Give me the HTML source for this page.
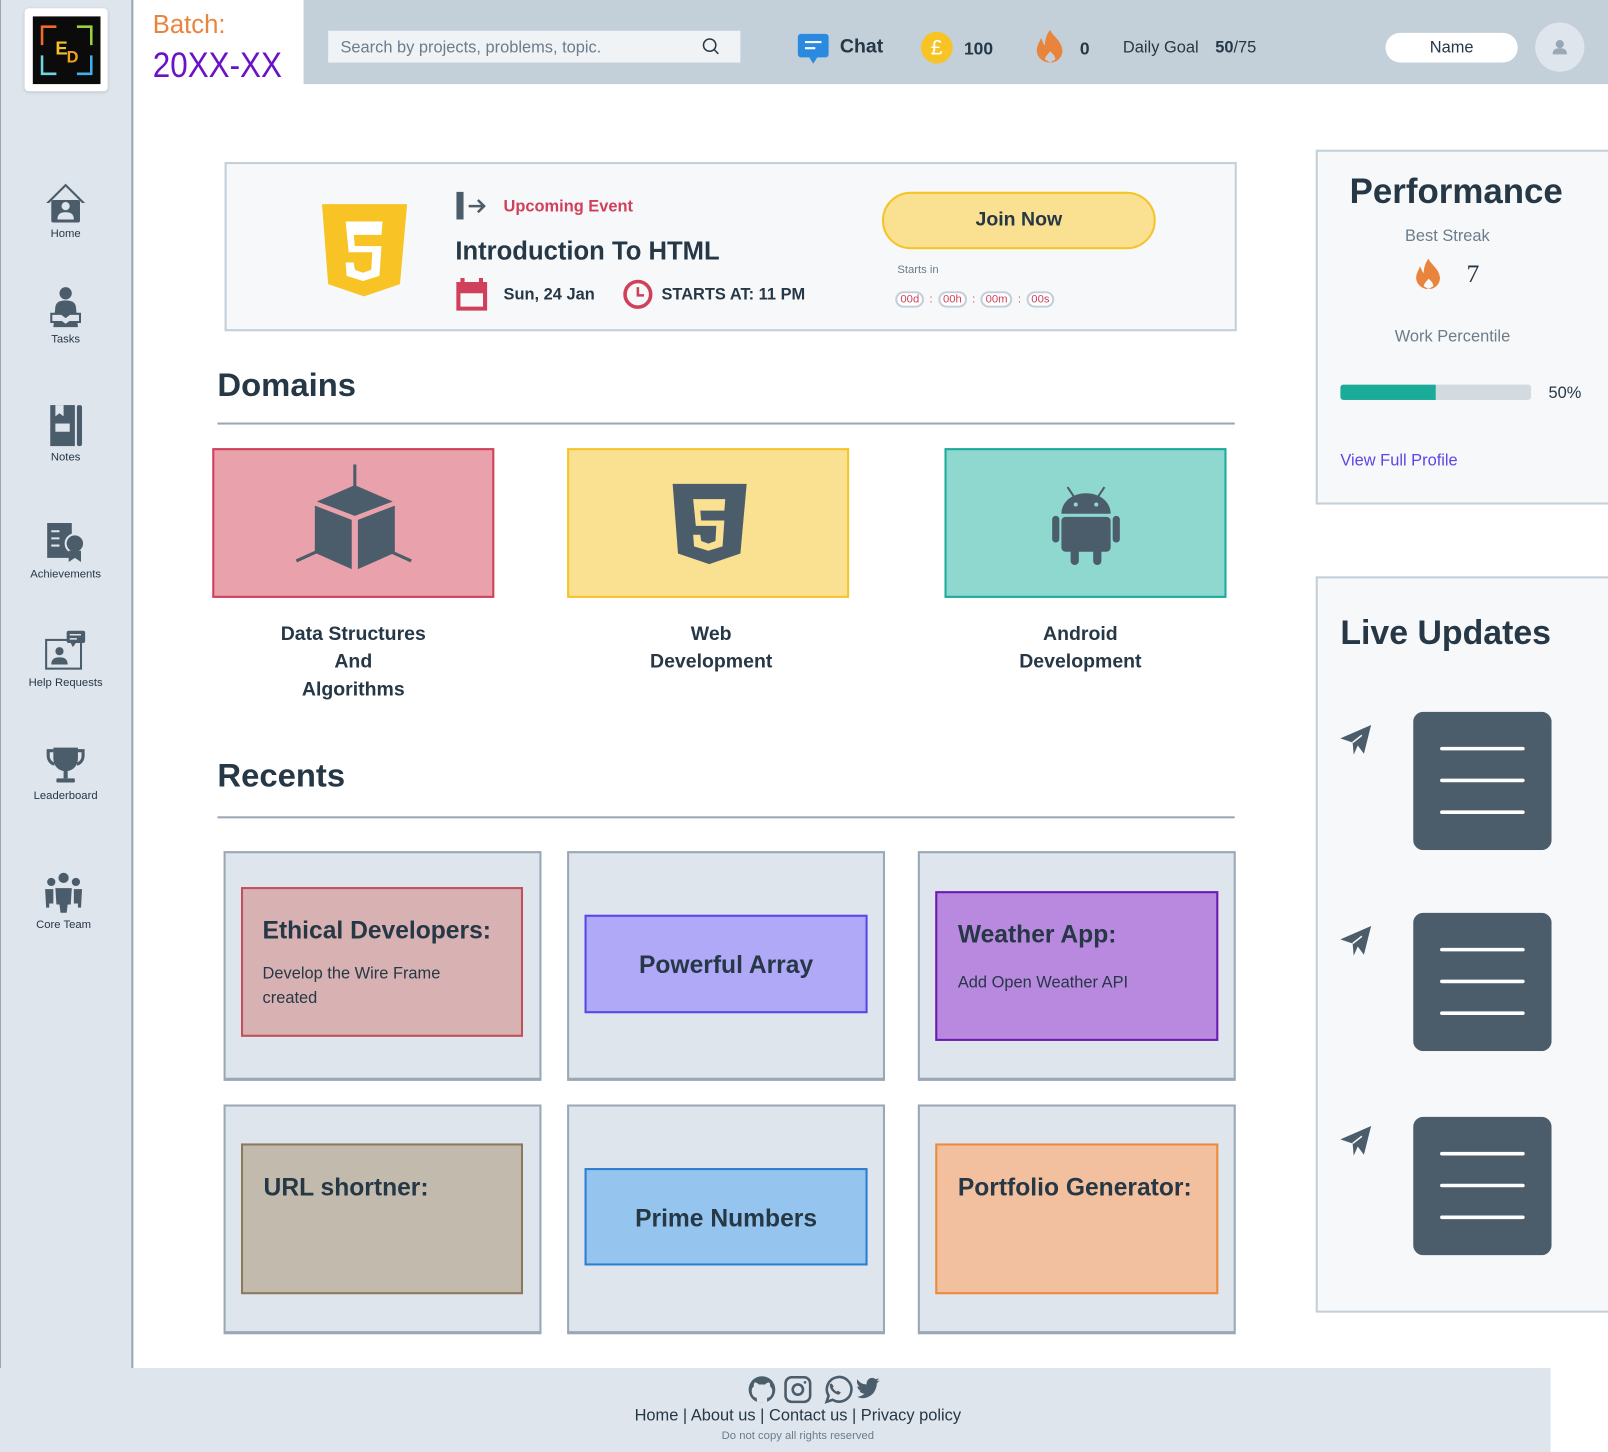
<!DOCTYPE html>
<html><head><meta charset="utf-8"><style>
*{margin:0;padding:0;box-sizing:border-box}
html,body{width:1608px;height:1452px;overflow:hidden;background:#fff;font-family:"Liberation Sans",sans-serif;color:#263746}
#w{position:absolute;left:0;top:0;width:1568px;height:1416px;transform:scale(1.02551);transform-origin:0 0}
.a{position:absolute}
.side{left:0;top:0;width:130px;height:1334px;background:#dfe5ed;border-right:2px solid #9aa8b6;border-left:1px solid #9aa8b6}
.nav{position:absolute;left:0;width:128px;text-align:center;font-size:11px;color:#263746}
.nav svg{display:block;margin:0 auto 4px}
.hdr{left:296px;top:0;width:1272px;height:82px;background:#c3cfd9}
.card{background:#f7f8fa;border:2px solid #c3cfd9}
.dom{border:2px solid}
.dl{position:absolute;text-align:center;font-weight:bold;font-size:19px;line-height:27px;color:#263746}
.rc{background:#dfe5ed;border:2px solid #9aa8b6;border-bottom-width:3px}
.in{border:2px solid;font-weight:bold;font-size:24px;color:#263746}
.cd{display:inline-block;border:2px solid #c3cfd9;border-radius:10px;font-size:11px;color:#d0405a;padding:0 3px;background:#fff}
</style></head><body><div id="w">
<div class="a side"></div>
<div class="a" style="left:24px;top:8px;width:81px;height:81px;background:#fff;border-radius:4px;box-shadow:0 1px 3px rgba(0,0,0,.15)"></div>
<div class="a" style="left:32px;top:16px;width:66px;height:66px;background:#0b0b0b">
<svg width="66" height="66"><path d="M9 28V10h14" stroke="#f06a2a" stroke-width="2.5" fill="none"/><path d="M43 10h14v18" stroke="#9bd23a" stroke-width="2.5" fill="none"/><path d="M9 38v18h14" stroke="#6fd3e0" stroke-width="2.5" fill="none"/><path d="M43 56h14V38" stroke="#3fb0ea" stroke-width="2.5" fill="none"/><text x="22" y="37" font-size="18" font-weight="bold" fill="#f2c12a" font-family="Liberation Sans">E</text><text x="33" y="45" font-size="16" font-weight="bold" fill="#f2a21a" font-family="Liberation Sans">D</text></svg></div>
<div class="a" style="left:149px;top:10px;font-size:25px;color:#e8843c">Batch:</div>
<div class="a" style="left:149px;top:45px;font-size:34px;color:#6a12c8;transform:scaleX(0.9);transform-origin:0 0">20XX-XX</div>
<div class="a hdr"></div>
<div class="a" style="left:320px;top:30px;width:402px;height:31px;background:#f0f3f6;font-size:16px;color:#6b7c8b;padding:8px 12px">Search by projects, problems, topic.
<svg class="a" style="left:364px;top:6px" width="20" height="20"><circle cx="8" cy="8" r="6" fill="none" stroke="#263746" stroke-width="1.5"/><path d="M12.5 12.5l4 4" stroke="#263746" stroke-width="1.5"/></svg></div>
<svg class="a" style="left:777px;top:32px" width="32" height="32"><rect x="1" y="1" width="30" height="23" rx="3" fill="#2a8ae0"/><path d="M12 24l4 6 4-6z" fill="#2a8ae0"/><path d="M8 9h16M8 15h10" stroke="#fff" stroke-width="2"/></svg>
<div class="a" style="left:819px;top:35px;font-size:19px;font-weight:bold">Chat</div>
<div class="a" style="left:898px;top:31px;width:31px;height:31px;border-radius:50%;background:#f7c325;color:#fff;font-size:21px;text-align:center;line-height:31px">£</div>
<div class="a" style="left:940px;top:38px;font-size:17px;font-weight:bold">100</div>
<svg class="a" style="left:1010px;top:28px" width="28" height="34" viewBox="0 0 28 34"><path d="M14 1c2 6 11 10 12 20 0 7-5 12-12 12S1 28 1 21c0-5 3-8 4-12 2 3 2 6 4 7 0-6 2-11 5-15z" fill="#e8843c"/><path d="M14 22c2 2 5 4 5 8l-5 3-5-3c0-3 3-5 5-8z" fill="#c3cfd9"/></svg>
<div class="a" style="left:1053px;top:38px;font-size:17px;font-weight:bold">0</div>
<div class="a" style="left:1095px;top:38px;font-size:16px">Daily Goal</div>
<div class="a" style="left:1185px;top:38px;font-size:16px"><b>50</b>/75</div>
<div class="a" style="left:1351px;top:32px;width:129px;height:29px;background:#fff;border-radius:15px;text-align:center;line-height:29px;font-size:16px">Name</div>
<div class="a" style="left:1497px;top:22px;width:48px;height:48px;border-radius:50%;background:#dfe5ed"><svg width="48" height="48"><circle cx="24" cy="21" r="4" fill="#9aa8b6"/><path d="M17 31c0-5 3-6 7-6s7 1 7 6z" fill="#9aa8b6"/></svg></div>

<div class="nav" style="top:178px"><svg width="40" height="40" viewBox="0 0 40 40"><path d="M20 1L1 20h3L20 4l16 16h3z" fill="#4b5c6b"/><rect x="6" y="17" width="28" height="22" rx="2" fill="#4b5c6b"/><circle cx="20" cy="23" r="4" fill="#dfe5ed"/><path d="M12 36c0-6 4-7 8-7s8 1 8 7z" fill="#dfe5ed"/></svg>Home</div>
<div class="nav" style="top:279px"><svg width="40" height="42" viewBox="0 0 40 42"><circle cx="20" cy="7" r="6" fill="#4b5c6b"/><path d="M8 40l2-20c1-5 5-6 10-6s9 1 10 6l2 20z" fill="#4b5c6b"/><path d="M6 27h10l4 3 4-3h10v8H24l-4 3-4-3H6z" fill="#dfe5ed" stroke="#4b5c6b" stroke-width="2"/></svg>Tasks</div>
<div class="nav" style="top:394px"><svg width="36" height="42" viewBox="0 0 36 42"><rect x="3" y="1" width="24" height="40" fill="#4b5c6b"/><rect x="29" y="1" width="5" height="40" rx="2" fill="#4b5c6b"/><rect x="8" y="19" width="14" height="8" fill="#dfe5ed"/><path d="M8 1v11l4-3 4 3V1" fill="#dfe5ed"/></svg>Notes</div>
<div class="nav" style="top:508px"><svg width="44" height="42" viewBox="0 0 44 42"><rect x="4" y="2" width="24" height="34" fill="#4b5c6b"/><path d="M8 10h8M8 17h8M8 24h8" stroke="#dfe5ed" stroke-width="2"/><circle cx="31" cy="22" r="9" fill="#4b5c6b" stroke="#dfe5ed" stroke-width="2"/><path d="M25 29v11l6-4 6 4V29" fill="#4b5c6b"/></svg>Achievements</div>
<div class="nav" style="top:614px"><svg width="44" height="42" viewBox="0 0 44 42"><rect x="3" y="10" width="34" height="28" fill="none" stroke="#4b5c6b" stroke-width="2"/><circle cx="16" cy="21" r="4" fill="#4b5c6b"/><path d="M8 34c0-6 4-7 8-7s8 1 8 7z" fill="#4b5c6b"/><rect x="23" y="1" width="18" height="12" rx="2" fill="#4b5c6b"/><path d="M27 13l2 4 3-4z" fill="#4b5c6b"/><path d="M26 5h11M26 9h7" stroke="#dfe5ed" stroke-width="1.5"/></svg>Help Requests</div>
<div class="nav" style="top:726px"><svg width="40" height="40" viewBox="0 0 40 40"><path d="M8 3h24v10c0 8-5 13-12 13S8 21 8 13z" fill="#4b5c6b"/><path d="M8 6H3v5c0 5 4 8 6 8M32 6h5v5c0 5-4 8-6 8" fill="none" stroke="#4b5c6b" stroke-width="3"/><rect x="18" y="25" width="4" height="8" fill="#4b5c6b"/><rect x="11" y="33" width="18" height="4" rx="1" fill="#4b5c6b"/></svg>Leaderboard</div>
<div class="nav" style="top:850px;left:-2px"><svg width="40" height="42" viewBox="0 0 40 42"><circle cx="20" cy="6" r="5" fill="#4b5c6b"/><circle cx="8" cy="10" r="4" fill="#4b5c6b"/><circle cx="32" cy="10" r="4" fill="#4b5c6b"/><path d="M12 16h16l-1 16h-3l-1 8h-6l-1-8h-3z" fill="#4b5c6b"/><path d="M2 17h8v14H6v4H3z M38 17h-8v14h4v4h3z" fill="#4b5c6b"/></svg>Core Team</div>

<div class="a card" style="left:219px;top:158px;width:987px;height:165px"></div>
<svg class="a" style="left:313px;top:198px" width="85" height="92" viewBox="0 0 85 92"><path d="M1 1h83l-7 78-35 12-35-12z" fill="#f7c325"/><path d="M60 18H24l3 30h23l-1 17-8 3-8-3-1-7h-8l1 13 16 5 16-5 2-29H33l-1-11h27z" fill="#fff"/></svg>
<svg class="a" style="left:445px;top:187px" width="32" height="28"><rect x="0" y="0" width="7" height="27" fill="#4b5c6b"/><path d="M12 14h14M21 8l6 6-6 6" stroke="#4b5c6b" stroke-width="2.5" fill="none"/></svg>
<div class="a" style="left:491px;top:193px;font-size:16px;font-weight:bold;color:#d0405a">Upcoming Event</div>
<div class="a" style="left:444px;top:231px;font-size:25px;font-weight:bold">Introduction To HTML</div>
<svg class="a" style="left:444px;top:271px" width="32" height="32"><rect x="1" y="4" width="30" height="28" fill="#d0405a"/><rect x="5" y="0" width="4" height="6" fill="#d0405a"/><rect x="23" y="0" width="4" height="6" fill="#d0405a"/><rect x="5" y="15" width="22" height="13" fill="#f7f8fa"/></svg>
<div class="a" style="left:491px;top:279px;font-size:16px;font-weight:bold">Sun, 24 Jan</div>
<svg class="a" style="left:607px;top:272px" width="30" height="30"><circle cx="15" cy="15" r="12.5" fill="none" stroke="#d0405a" stroke-width="3.5"/><path d="M15 8v8h6" stroke="#d0405a" stroke-width="2.5" fill="none"/></svg>
<div class="a" style="left:645px;top:279px;font-size:16px;font-weight:bold">STARTS AT: 11 PM</div>
<div class="a" style="left:860px;top:187px;width:267px;height:56px;border-radius:28px;background:#fae091;border:2px solid #f5c42a;text-align:center;line-height:52px;font-size:19px;font-weight:bold">Join Now</div>
<div class="a" style="left:875px;top:257px;font-size:11px;color:#6b7c8b">Starts in</div>
<div class="a" style="left:873px;top:284px;font-size:11px;color:#d0405a;word-spacing:2px"><span class="cd">00d</span> : <span class="cd">00h</span> : <span class="cd">00m</span> : <span class="cd">00s</span></div>

<div class="a" style="left:212px;top:357px;font-size:32px;font-weight:bold">Domains</div>
<div class="a" style="left:212px;top:412px;width:992px;height:2px;background:#9aa8b6"></div>
<div class="a dom" style="left:207px;top:437px;width:275px;height:146px;background:#e9a2ab;border-color:#d0405a">
<svg style="position:absolute;left:78px;top:14px" width="116" height="104" viewBox="0 0 116 104"><path d="M59 0v22" stroke="#4b5c6b" stroke-width="3"/><path d="M59 20l37 16-37 14-37-14z" fill="#4b5c6b"/><path d="M20 40l36 14v48L20 86z" fill="#4b5c6b"/><path d="M98 40v46l-36 16V54z" fill="#4b5c6b"/><path d="M2 94l22-10M114 94l-22-10" stroke="#4b5c6b" stroke-width="3"/></svg></div>
<div class="a dom" style="left:553px;top:437px;width:275px;height:146px;background:#fae091;border-color:#f5c42a">
<svg style="position:absolute;left:100px;top:32px" width="74" height="80" viewBox="0 0 85 92"><path d="M1 1h83l-7 78-35 12-35-12z" fill="#4b5c6b"/><path d="M60 18H24l3 30h23l-1 17-8 3-8-3-1-7h-8l1 13 16 5 16-5 2-29H33l-1-11h27z" fill="#fae091"/></svg></div>
<div class="a dom" style="left:921px;top:437px;width:275px;height:146px;background:#8fd8cf;border-color:#1aab99">
<svg style="position:absolute;left:102px;top:34px" width="68" height="80" viewBox="0 0 68 80"><path d="M16 2l6 9M52 2l-6 9" stroke="#4b5c6b" stroke-width="2"/><path d="M10 28c0-12 11-20 24-20s24 8 24 20z" fill="#4b5c6b"/><circle cx="24" cy="19" r="2" fill="#8fd8cf"/><circle cx="44" cy="19" r="2" fill="#8fd8cf"/><rect x="10" y="31" width="48" height="34" rx="4" fill="#4b5c6b"/><rect x="1" y="30" width="7" height="26" rx="3.5" fill="#4b5c6b"/><rect x="60" y="30" width="7" height="26" rx="3.5" fill="#4b5c6b"/><rect x="19" y="60" width="8" height="18" rx="4" fill="#4b5c6b"/><rect x="41" y="60" width="8" height="18" rx="4" fill="#4b5c6b"/></svg></div>
<div class="dl" style="left:207px;top:605px;width:275px">Data Structures<br>And<br>Algorithms</div>
<div class="dl" style="left:556px;top:605px;width:275px">Web<br>Development</div>
<div class="dl" style="left:921px;top:605px;width:265px">Android<br>Development</div>

<div class="a" style="left:212px;top:738px;font-size:32px;font-weight:bold">Recents</div>
<div class="a" style="left:212px;top:796px;width:992px;height:2px;background:#9aa8b6"></div>
<div class="a rc" style="left:218px;top:830px;width:310px;height:224px"></div>
<div class="a rc" style="left:553px;top:830px;width:310px;height:224px"></div>
<div class="a rc" style="left:895px;top:830px;width:310px;height:224px"></div>
<div class="a rc" style="left:218px;top:1077px;width:310px;height:224px"></div>
<div class="a rc" style="left:553px;top:1077px;width:310px;height:224px"></div>
<div class="a rc" style="left:895px;top:1077px;width:310px;height:224px"></div>
<div class="a in" style="left:235px;top:865px;width:275px;height:146px;background:#d8b2b2;border-color:#c0505a;padding:27px 19px">Ethical Developers:<div style="font-size:16px;font-weight:normal;margin-top:16px;line-height:24px">Develop the Wire Frame<br>created</div></div>
<div class="a in" style="left:570px;top:892px;width:276px;height:96px;background:#b0a9f8;border-color:#5a46e6;text-align:center;line-height:96px">Powerful Array</div>
<div class="a in" style="left:912px;top:869px;width:276px;height:146px;background:#b989e0;border-color:#6a1bb0;padding:27px 20px">Weather App:<div style="font-size:16px;font-weight:normal;margin-top:24px">Add Open Weather API</div></div>
<div class="a in" style="left:235px;top:1115px;width:275px;height:147px;background:#c2baad;border-color:#8a7a5a;padding:28px 20px">URL shortner:</div>
<div class="a in" style="left:570px;top:1139px;width:276px;height:95px;background:#95c4ee;border-color:#2a7fd0;text-align:center;line-height:95px">Prime Numbers</div>
<div class="a in" style="left:912px;top:1115px;width:276px;height:147px;background:#f2c09e;border-color:#ec8a3c;padding:28px 20px">Portfolio Generator:</div>

<div class="a card" style="left:1283px;top:146px;width:290px;height:346px"></div>
<div class="a" style="left:1283px;top:168px;width:274px;text-align:center;font-size:34px;font-weight:bold">Performance</div>
<div class="a" style="left:1370px;top:222px;font-size:16px;color:#6b7c8b">Best Streak</div>
<svg class="a" style="left:1380px;top:251px" width="26" height="32" viewBox="0 0 28 34"><path d="M14 1c2 6 11 10 12 20 0 7-5 12-12 12S1 28 1 21c0-5 3-8 4-12 2 3 2 6 4 7 0-6 2-11 5-15z" fill="#e8843c"/><path d="M14 22c2 2 5 4 5 8l-5 3-5-3c0-3 3-5 5-8z" fill="#f7f8fa"/></svg>
<div class="a" style="left:1430px;top:254px;font-size:25px;font-family:'Liberation Serif',serif">7</div>
<div class="a" style="left:1360px;top:320px;font-size:16px;color:#6b7c8b">Work Percentile</div>
<div class="a" style="left:1307px;top:375px;width:186px;height:15px;border-radius:3px;background:#d3dae0;overflow:hidden"><div style="width:93px;height:15px;background:#1aab99"></div></div>
<div class="a" style="left:1510px;top:375px;font-size:16px">50%</div>
<div class="a" style="left:1307px;top:441px;font-size:16px;color:#5a46e6">View Full Profile</div>

<div class="a card" style="left:1283px;top:562px;width:290px;height:718px"></div>
<div class="a" style="left:1307px;top:598px;font-size:33px;font-weight:bold">Live Updates</div>
<svg class="a" style="left:1306px;top:706px" width="32" height="32"><path d="M1 14L31 1 24 29 18 21 14 30 13 18z" fill="#4b5c6b"/><path d="M13 18l9-7" stroke="#f7f8fa" stroke-width="1.5"/></svg>
<svg class="a" style="left:1306px;top:902px" width="32" height="32"><path d="M1 14L31 1 24 29 18 21 14 30 13 18z" fill="#4b5c6b"/><path d="M13 18l9-7" stroke="#f7f8fa" stroke-width="1.5"/></svg>
<svg class="a" style="left:1306px;top:1097px" width="32" height="32"><path d="M1 14L31 1 24 29 18 21 14 30 13 18z" fill="#4b5c6b"/><path d="M13 18l9-7" stroke="#f7f8fa" stroke-width="1.5"/></svg>
<svg class="a" style="left:1378px;top:694px" width="135" height="135"><rect width="135" height="135" rx="10" fill="#4b5c6b"/><path d="M28 36h79M28 67h79M28 98h79" stroke="#fff" stroke-width="3.5" stroke-linecap="round"/></svg>
<svg class="a" style="left:1378px;top:890px" width="135" height="135"><rect width="135" height="135" rx="10" fill="#4b5c6b"/><path d="M28 36h79M28 67h79M28 98h79" stroke="#fff" stroke-width="3.5" stroke-linecap="round"/></svg>
<svg class="a" style="left:1378px;top:1089px" width="135" height="135"><rect width="135" height="135" rx="10" fill="#4b5c6b"/><path d="M28 36h79M28 67h79M28 98h79" stroke="#fff" stroke-width="3.5" stroke-linecap="round"/></svg>

<div class="a" style="left:0;top:1334px;width:1512px;height:82px;background:#dfe5ed"></div>
<svg class="a" style="left:728px;top:1340px" width="138" height="30" viewBox="0 0 138 30"><circle cx="15" cy="15" r="13" fill="#4b5c6b"/><path d="M10 28v-5c-3 0-5-3-5-7 0-2 1-3 2-4 0-1 0-3 1-4 1 0 3 1 4 2h6c1-1 3-2 4-2 1 1 1 3 1 4 1 1 2 2 2 4 0 4-2 7-5 7v5z" fill="#dfe5ed"/><rect x="38" y="3" width="24" height="24" rx="6" fill="none" stroke="#4b5c6b" stroke-width="2.5"/><circle cx="50" cy="15" r="5" fill="none" stroke="#4b5c6b" stroke-width="2.5"/><circle cx="57" cy="8" r="1.3" fill="#4b5c6b"/><path d="M78 27l2-6a12 12 0 1 1 4 4z" fill="none" stroke="#4b5c6b" stroke-width="2.5"/><path d="M81 10c0 5 4 9 9 10l2-2-3-2-1 1c-2-1-3-2-4-4l1-1-2-3z" fill="#4b5c6b"/><path d="M108 22c5 3 12 1 16-4 2-3 3-6 3-9l3-3-3 1 2-3-3 1c-2-2-6-2-8 1-1 1-1 3-1 4-4 0-7-2-9-5-1 3 0 5 2 7h-2c0 2 2 4 4 4h-2c1 2 3 3 5 3-2 2-5 3-7 3z" fill="#4b5c6b"/></svg>
<div class="a" style="left:0;top:1372px;width:1556px;text-align:center;font-size:16px;color:#263746">Home | About us | Contact us | Privacy policy</div>
<div class="a" style="left:0;top:1394px;width:1556px;text-align:center;font-size:11px;color:#6b7c8b">Do not copy all rights reserved</div>
</div></body></html>
